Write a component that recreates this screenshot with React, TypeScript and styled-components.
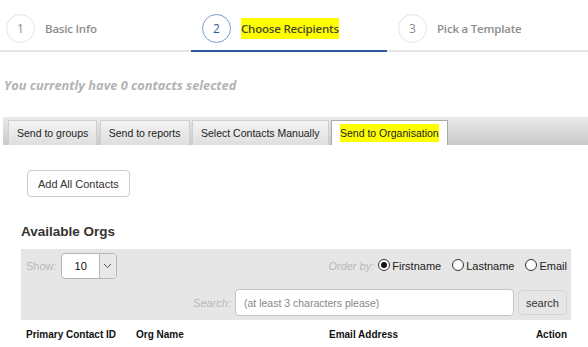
import React from "react";
import styled, { createGlobalStyle } from "styled-components";

const GlobalStyle = createGlobalStyle`
  html, body {
    margin: 0;
    padding: 0;
    background: #fff;
  }
  * {
    box-sizing: border-box;
  }
`;

const Page = styled.div`
  width: 588px;
  height: 347px;
  overflow: hidden;
  font-family: "Liberation Sans", Arial, sans-serif;
  color: #333;
`;

const Stepper = styled.div`
  display: flex;
  height: 52px;
  padding-top: 6px;
  border-bottom: 2px solid #e6e6e6;
  margin-left: -5px;
  font-family: "Open Sans", sans-serif;
`;

const Step = styled.div<{ active?: boolean }>`
  flex: 0 0 196px;
  display: flex;
  align-items: center;
  gap: 10px;
  padding-left: 11px;
  margin-bottom: -2px;
  border-bottom: 2px solid ${({ active }) => (active ? "#2c5a9c" : "transparent")};
`;

const StepNumber = styled.span<{ active?: boolean }>`
  width: 29px;
  height: 29px;
  border-radius: 50%;
  border: 1px solid ${({ active }) => (active ? "#7f9bc8" : "#e2e2e2")};
  display: flex;
  align-items: center;
  justify-content: center;
  font-size: 12px;
  color: ${({ active }) => (active ? "#2c5a9c" : "#8a8a8a")};
`;

const StepLabel = styled.span<{ active?: boolean }>`
  font-size: 11.5px;
  font-weight: 600;
  letter-spacing: -0.2px;
  color: ${({ active }) => (active ? "#4a4a2a" : "#8d8d8d")};
  background: ${({ active }) => (active ? "#ffff00" : "transparent")};
  padding: 3px 0;
`;

const Summary = styled.h2`
  margin: 24px 0 0 4px;
  font-family: "Open Sans", sans-serif;
  font-size: 12.8px;
  font-style: italic;
  font-weight: 700;
  color: #b3b3b3;
  line-height: 18px;
`;

const TabBar = styled.div`
  display: flex;
  align-items: flex-end;
  gap: 2.5px;
  height: 28px;
  margin: 23px 0 0 3px;
  padding-left: 5px;
  background: linear-gradient(#eaeaea, #c9c9c9);
`;

const Tab = styled.div<{ active?: boolean }>`
  height: 25px;
  display: flex;
  align-items: center;
  padding: 0 8px;
  font-size: 10.5px;
  color: #222;
  border: 1px solid #cfcfcf;
  border-bottom: none;
  background: ${({ active }) =>
    active ? "#fff" : "linear-gradient(#f4f4f4, #dedede)"};
  border-color: ${({ active }) => (active ? "#aaa" : "#cfcfcf")};
`;

const Highlight = styled.span`
  background: #ffff00;
  padding: 3px 0;
`;

const Content = styled.div`
  padding: 25px 17px 0 21px;
`;

const AddButton = styled.button`
  margin-left: 6px;
  height: 27px;
  padding: 0 10px;
  font-family: "Liberation Sans", Arial, sans-serif;
  font-size: 11px;
  color: #333;
  background: #fff;
  border: 1px solid #ccc;
  border-radius: 4px;
`;

const SectionTitle = styled.h3`
  margin: 27px 0 9px;
  font-size: 13.5px;
  font-weight: 700;
  color: #333;
  line-height: 16px;
`;

const Filters = styled.div`
  background: #e6e6e6;
  padding: 4px 4px 4px 5px;
  display: flex;
  flex-direction: column;
  gap: 10px;
`;

const FilterRow = styled.div<{ end?: boolean }>`
  display: flex;
  align-items: center;
  justify-content: ${({ end }) => (end ? "flex-end" : "space-between")};
  gap: 4px;
`;

const Group = styled.div`
  display: flex;
  align-items: center;
  gap: 4px;
`;

const MutedLabel = styled.span<{ italic?: boolean }>`
  font-size: 11px;
  color: #b8b8b8;
  font-style: ${({ italic }) => (italic ? "italic" : "normal")};
`;

const SelectBox = styled.div`
  display: flex;
  width: 56px;
  height: 26px;
  border: 1px solid #b5b5b5;
  border-radius: 4px;
  overflow: hidden;
  background: #fff;
`;

const SelectValue = styled.span`
  flex: 1;
  display: flex;
  align-items: center;
  padding-left: 13px;
  font-size: 11px;
  color: #111;
`;

const SelectArrow = styled.span`
  width: 17px;
  display: flex;
  align-items: center;
  justify-content: center;
  background: #e8e8e8;
  border-left: 1px solid #b5b5b5;
`;

const RadioOption = styled.label<{ first?: boolean }>`
  display: flex;
  align-items: center;
  gap: 2px;
  margin-left: ${({ first }) => (first ? "0" : "7px")};
  font-size: 11px;
  color: #222;
`;

const RadioDot = styled.span<{ checked?: boolean }>`
  width: 12px;
  height: 12px;
  border-radius: 50%;
  border: 1px solid #333;
  background: #fff;
  display: flex;
  align-items: center;
  justify-content: center;
  margin-top: -3px;

  &::after {
    content: "";
    width: 6px;
    height: 6px;
    border-radius: 50%;
    background: ${({ checked }) => (checked ? "#111" : "transparent")};
  }
`;

const SearchInput = styled.input`
  width: 279px;
  height: 27px;
  padding: 0 8px;
  border: 1px solid #c4c4c4;
  border-radius: 4px;
  font-family: "Liberation Sans", Arial, sans-serif;
  font-size: 10.5px;
  outline: none;

  &::placeholder {
    color: #888;
  }
`;

const SearchButton = styled.button`
  height: 25px;
  padding: 0 7px;
  font-family: "Liberation Sans", Arial, sans-serif;
  font-size: 11px;
  color: #333;
  background: #e6e6e6;
  border: 1px solid #d4d4d4;
  border-radius: 4px;
`;

const TableHead = styled.div`
  display: grid;
  grid-template-columns: 110px 193px 1fr auto;
  align-items: center;
  height: 28px;
  padding: 0 4px 0 5px;
  font-size: 10px;
  font-weight: 700;
  color: #111;
`;

const Chevron = () => (
  <svg width="9" height="6" viewBox="0 0 9 6">
    <path d="M1 1l3.5 3.5L8 1" fill="none" stroke="#555" strokeWidth="1" />
  </svg>
);

const steps = ["Basic Info", "Choose Recipients", "Pick a Template"];
const tabs = ["Send to groups", "Send to reports", "Select Contacts Manually"];
const orderOptions = ["Firstname", "Lastname", "Email"];

export default function App() {
  return (
    <Page>
      <GlobalStyle />
      <Stepper>
        {steps.map((label, i) => (
          <Step key={label} active={i === 1}>
            <StepNumber active={i === 1}>{i + 1}</StepNumber>
            <StepLabel active={i === 1}>{label}</StepLabel>
          </Step>
        ))}
      </Stepper>

      <Summary>You currently have 0 contacts selected</Summary>

      <TabBar>
        {tabs.map((t) => (
          <Tab key={t}>{t}</Tab>
        ))}
        <Tab active>
          <Highlight>Send to Organisation</Highlight>
        </Tab>
      </TabBar>

      <Content>
        <AddButton>Add All Contacts</AddButton>
        <SectionTitle>Available Orgs</SectionTitle>
        <Filters>
          <FilterRow>
            <Group>
              <MutedLabel>Show:</MutedLabel>
              <SelectBox>
                <SelectValue>10</SelectValue>
                <SelectArrow>
                  <Chevron />
                </SelectArrow>
              </SelectBox>
            </Group>
            <Group>
              <MutedLabel italic>Order by:</MutedLabel>
              {orderOptions.map((o, i) => (
                <RadioOption key={o} first={i === 0}>
                  <RadioDot checked={i === 0} />
                  {o}
                </RadioOption>
              ))}
            </Group>
          </FilterRow>
          <FilterRow end>
            <MutedLabel italic>Search:</MutedLabel>
            <SearchInput placeholder="(at least 3 characters please)" />
            <SearchButton>search</SearchButton>
          </FilterRow>
        </Filters>
        <TableHead>
          <span>Primary Contact ID</span>
          <span>Org Name</span>
          <span>Email Address</span>
          <span>Action</span>
        </TableHead>
      </Content>
    </Page>
  );
}
